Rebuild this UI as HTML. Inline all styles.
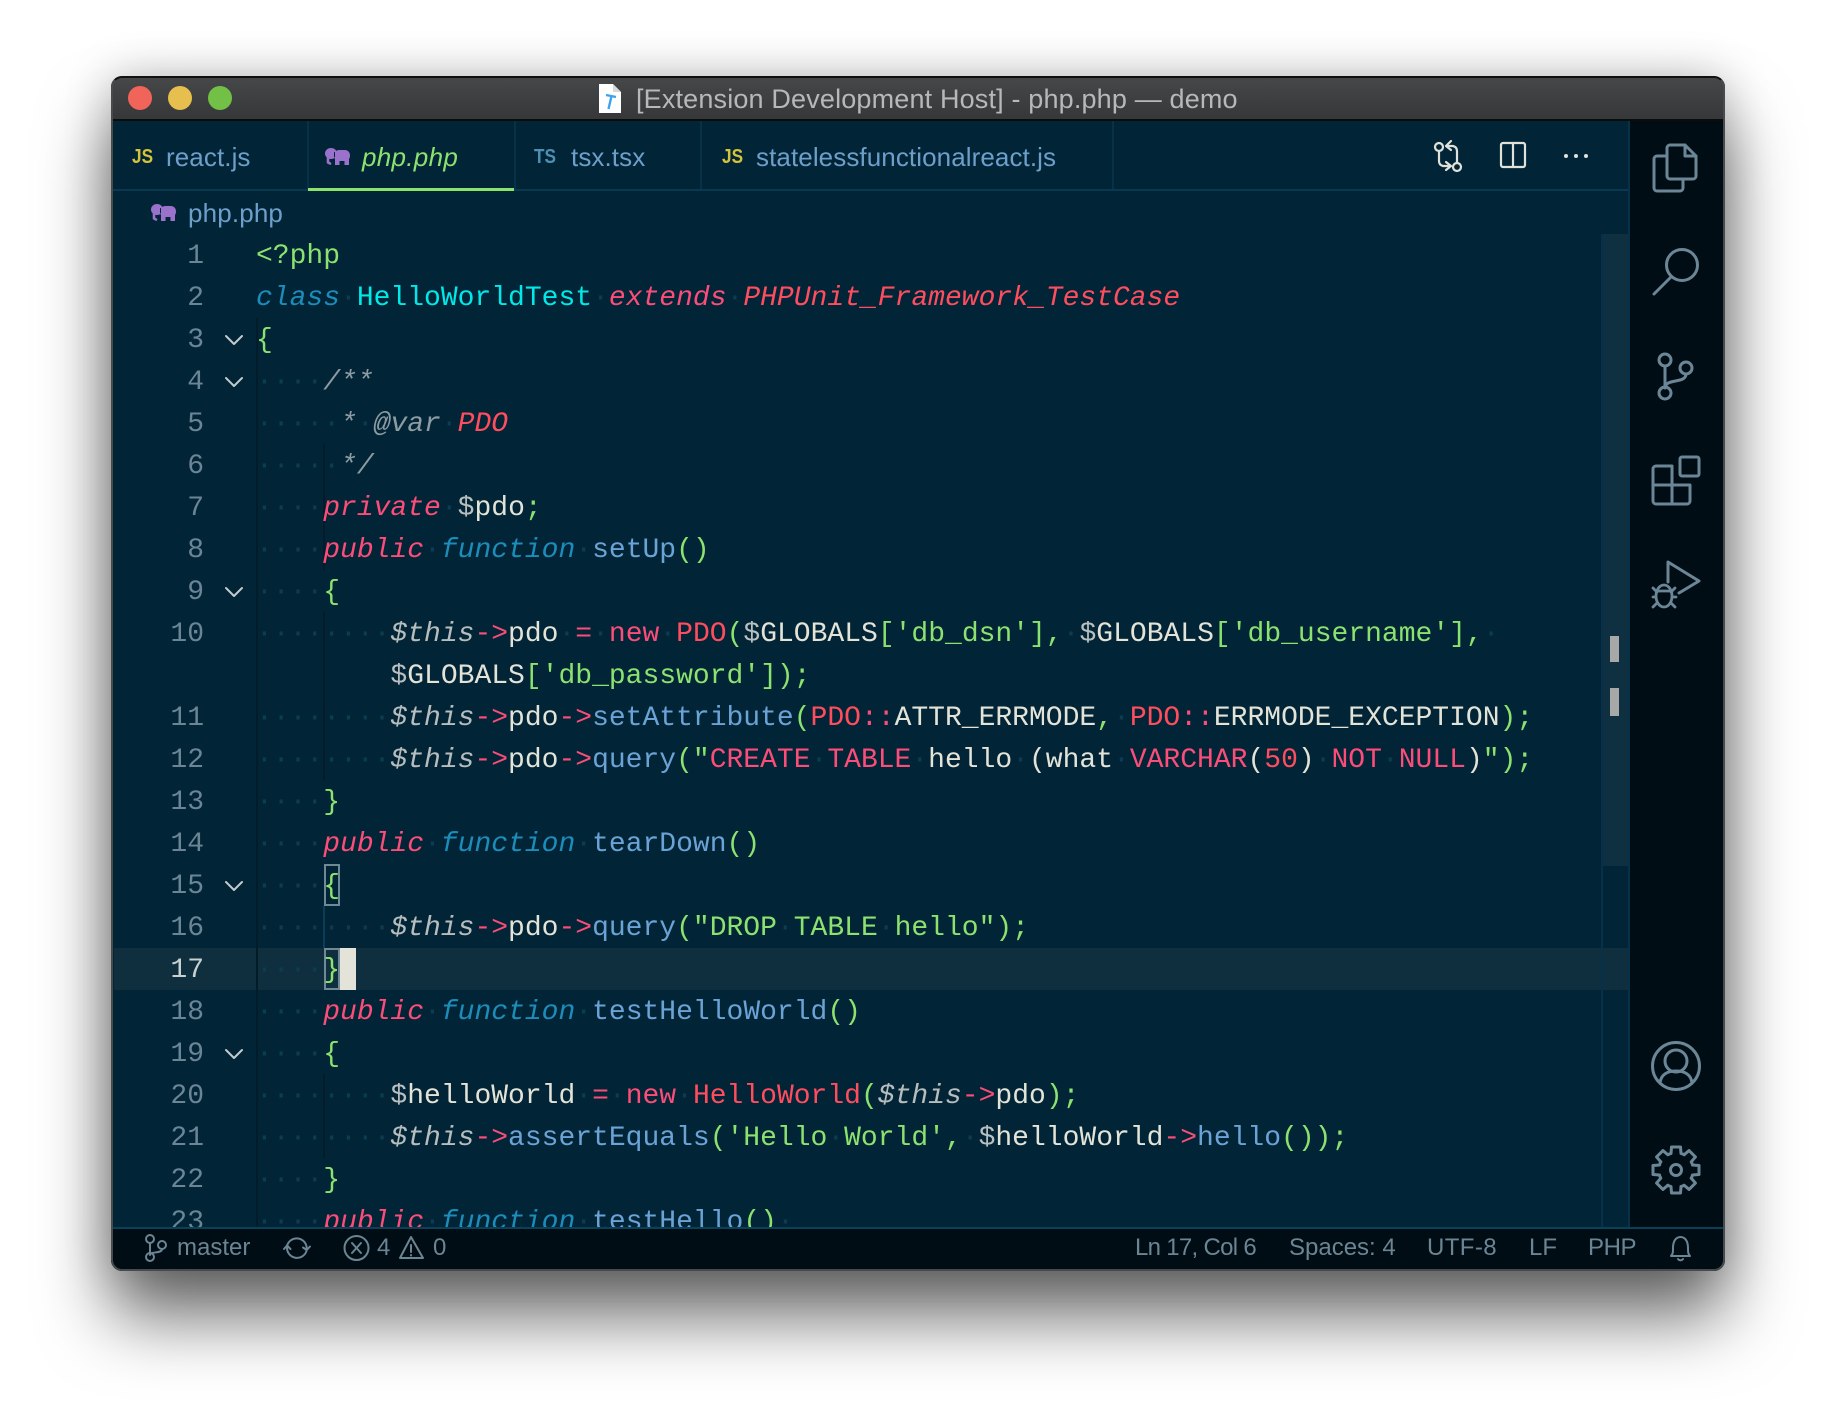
<!DOCTYPE html>
<html><head><meta charset="utf-8">
<style>
html,body{margin:0;padding:0;background:#fff}
body{width:1836px;height:1418px;overflow:hidden;position:relative}
.win{position:absolute;left:111px;top:76px;width:1614px;height:1195px;border-radius:11px;box-shadow:0 46px 70px rgba(0,0,0,.58),0 0 46px rgba(0,0,0,.22)}
.clip{position:absolute;left:0;top:0;width:1614px;height:1195px;border-radius:11px;overflow:hidden;background:#012537}
.in{position:absolute;left:-111px;top:-76px;width:1836px;height:1418px}
.a{position:absolute}
.s{font-family:"Liberation Sans",sans-serif;white-space:pre}
pre{margin:0;font-family:"Liberation Mono",monospace;font-size:28px;line-height:42px}
.t{position:absolute;font-size:26px;line-height:34px;top:140px;color:#6d9fca;letter-spacing:.09px}
.st{position:absolute;font-size:24px;line-height:30px;top:1233px;color:#6b8594}
.ic{position:absolute;top:144px;font-size:20px;line-height:26px;font-weight:bold;transform:scaleX(.86);transform-origin:0 50%}
.d{color:#0d3c52}
.k{color:#fb4d78;font-style:italic}
.f{color:#1c8dbb;font-style:italic}
.g{color:#8ce26f}
.b{color:#6ba3d6}
.w{color:#e3e3d8}
.c{color:#8d9ba3;font-style:italic}
.i{color:#b7bdbd;font-style:italic}
.r{color:#ff4d5e}
.ri{color:#ff4d5e;font-style:italic}
.p{color:#fb4d78}
.y{color:#00e8e8}
.v{color:#b9bfbf}
</style></head>
<body>
<div class="win"><div class="clip"><div class="in">
  <!-- title bar -->
  <div class="a" style="left:111px;top:76px;width:1614px;height:45px;background:linear-gradient(#46484a,#353739);border-bottom:2px solid #0c0c0c;box-sizing:border-box"></div>
  <div class="a" style="left:128px;top:86px;width:24px;height:24px;border-radius:50%;background:#f0645a"></div>
  <div class="a" style="left:168px;top:86px;width:24px;height:24px;border-radius:50%;background:#e6bf4e"></div>
  <div class="a" style="left:208px;top:86px;width:24px;height:24px;border-radius:50%;background:#72c045"></div>
  <svg class="a" style="left:598px;top:82px" width="24" height="32" viewBox="0 0 24 32"><path d="M1 2H15L23 10V31H1Z" fill="#fff"/><path d="M15 2V10H23" fill="#d8d8d8"/><path d="M8 13L18 15M13.5 14L10.5 27" stroke="#3ea2ee" stroke-width="2.4" fill="none"/></svg>
  <div class="a s" style="left:636px;top:83px;font-size:27px;letter-spacing:.165px;line-height:32px;color:#b6b8b9">[Extension Development Host] - php.php — demo</div>

  <!-- tabs -->
  <div class="a" style="left:111px;top:189px;width:1519px;height:2px;background:#0a3850"></div>
  <div class="a" style="left:307px;top:121px;width:2px;height:68px;background:#053248"></div>
  <div class="a" style="left:514px;top:121px;width:2px;height:68px;background:#053248"></div>
  <div class="a" style="left:700px;top:121px;width:2px;height:68px;background:#053248"></div>
  <div class="a" style="left:1112px;top:121px;width:2px;height:68px;background:#053248"></div>
  <div class="a" style="left:308px;top:188px;width:206px;height:3px;background:#8ce26f"></div>
  <div class="ic s" style="left:132px;color:#d6c33c">JS</div>
  <div class="t s" style="left:166px">react.js</div>
  <div class="t s" style="left:362px;color:#8ce26f;font-style:italic;letter-spacing:.3px">php.php</div>
  <div class="ic s" style="left:534px;color:#4e90b4">TS</div>
  <div class="t s" style="left:571px">tsx.tsx</div>
  <div class="ic s" style="left:722px;color:#d6c33c">JS</div>
  <div class="t s" style="left:756px">statelessfunctionalreact.js</div>
  <div class="a s" style="left:188px;top:196px;font-size:26px;letter-spacing:.15px;line-height:34px;color:#6d9fca">php.php</div>

  <!-- current line -->
  <div class="a" style="left:114px;top:948px;width:1514px;height:42px;background:#0f2f3e"></div>
  <div class="a" style="left:256px;top:948px;width:2px;height:42px;background:#021c2a"></div>
  <!-- scrollbar -->
  <div class="a" style="left:1601px;top:234px;width:27px;height:632px;background:#0e3040"></div>
  <div class="a" style="left:1601px;top:234px;width:2px;height:993px;background:#073049"></div>
  <div class="a" style="left:1610px;top:636px;width:9px;height:26px;background:#a8a8a8"></div>
  <div class="a" style="left:1610px;top:688px;width:9px;height:28px;background:#a8a8a8"></div>
  <!-- guides -->
  <div class="a" style="left:256px;top:318px;width:2px;height:909px;background:#021c2a"></div>
  <div class="a" style="left:323px;top:444px;width:2px;height:126px;background:#021c2a"></div>
  <div class="a" style="left:323px;top:612px;width:2px;height:168px;background:#021c2a"></div>
  <div class="a" style="left:323px;top:906px;width:2px;height:42px;background:#0a3d5a"></div>
  <div class="a" style="left:323px;top:1074px;width:2px;height:84px;background:#021c2a"></div>
  <!-- bracket boxes & cursor -->
  <div class="a" style="left:324px;top:864px;width:16px;height:42px;box-sizing:border-box;border:2px solid #6f8a96"></div>
  <div class="a" style="left:324px;top:948px;width:16px;height:42px;box-sizing:border-box;border:2px solid #6f8a96"></div>
  <div class="a" style="left:340px;top:948px;width:16px;height:42px;background:#e3e3da"></div>

  <!-- editor -->
  <div class="a" style="left:114px;top:234px;width:1487px;height:993px;overflow:hidden">
<pre class="a" style="left:0;top:2px;width:90px;text-align:right;color:#6b8594">1
2
3
4
5
6
7
8
9
10

11
12
13
14
15
16
<span style="color:#c9d0d2">17</span>
18
19
20
21
22
23</pre>
<pre class="a" style="left:142px;top:2px"><span class="g">&lt;?php</span>
<span class="f">class</span><span class="d">·</span><span class="y">HelloWorldTest</span><span class="d">·</span><span class="k">extends</span><span class="d">·</span><span class="ri">PHPUnit_Framework_TestCase</span>
<span class="g">{</span>
<span class="d">····</span><span class="c">/**</span>
<span class="d">·····</span><span class="c">*</span><span class="d">·</span><span class="c">@var</span><span class="d">·</span><span class="ri">PDO</span>
<span class="d">·····</span><span class="c">*/</span>
<span class="d">····</span><span class="k">private</span><span class="d">·</span><span class="v">$</span><span class="w">pdo</span><span class="g">;</span>
<span class="d">····</span><span class="k">public</span><span class="d">·</span><span class="f">function</span><span class="d">·</span><span class="b">setUp</span><span class="g">()</span>
<span class="d">····</span><span class="g">{</span>
<span class="d">········</span><span class="i">$this</span><span class="p">-&gt;</span><span class="w">pdo</span><span class="d">·</span><span class="p">=</span><span class="d">·</span><span class="p">new</span><span class="d">·</span><span class="r">PDO</span><span class="g">(</span><span class="v">$</span><span class="w">GLOBALS</span><span class="g">['db_dsn'],</span><span class="d">·</span><span class="v">$</span><span class="w">GLOBALS</span><span class="g">['db_username'],</span><span class="d">·</span>
        <span class="v">$</span><span class="w">GLOBALS</span><span class="g">['db_password']);</span>
<span class="d">········</span><span class="i">$this</span><span class="p">-&gt;</span><span class="w">pdo</span><span class="p">-&gt;</span><span class="b">setAttribute</span><span class="g">(</span><span class="r">PDO</span><span class="p">::</span><span class="w">ATTR_ERRMODE</span><span class="g">,</span><span class="d">·</span><span class="r">PDO</span><span class="p">::</span><span class="w">ERRMODE_EXCEPTION</span><span class="g">);</span>
<span class="d">········</span><span class="i">$this</span><span class="p">-&gt;</span><span class="w">pdo</span><span class="p">-&gt;</span><span class="b">query</span><span class="g">("</span><span class="p">CREATE</span><span class="d">·</span><span class="p">TABLE</span><span class="d">·</span><span class="w">hello</span><span class="d">·</span><span class="w">(what</span><span class="d">·</span><span class="p">VARCHAR</span><span class="w">(</span><span class="r">50</span><span class="w">)</span><span class="d">·</span><span class="p">NOT</span><span class="d">·</span><span class="p">NULL</span><span class="w">)</span><span class="g">");</span>
<span class="d">····</span><span class="g">}</span>
<span class="d">····</span><span class="k">public</span><span class="d">·</span><span class="f">function</span><span class="d">·</span><span class="b">tearDown</span><span class="g">()</span>
<span class="d">····</span><span class="g">{</span>
<span class="d">········</span><span class="i">$this</span><span class="p">-&gt;</span><span class="w">pdo</span><span class="p">-&gt;</span><span class="b">query</span><span class="g">("DROP</span><span class="d">·</span><span class="g">TABLE</span><span class="d">·</span><span class="g">hello");</span>
<span class="d">····</span><span class="g">}</span>
<span class="d">····</span><span class="k">public</span><span class="d">·</span><span class="f">function</span><span class="d">·</span><span class="b">testHelloWorld</span><span class="g">()</span>
<span class="d">····</span><span class="g">{</span>
<span class="d">········</span><span class="v">$</span><span class="w">helloWorld</span><span class="d">·</span><span class="p">=</span><span class="d">·</span><span class="p">new</span><span class="d">·</span><span class="r">HelloWorld</span><span class="g">(</span><span class="i">$this</span><span class="p">-&gt;</span><span class="w">pdo</span><span class="g">);</span>
<span class="d">········</span><span class="i">$this</span><span class="p">-&gt;</span><span class="b">assertEquals</span><span class="g">('Hello</span><span class="d">·</span><span class="g">World',</span><span class="d">·</span><span class="v">$</span><span class="w">helloWorld</span><span class="p">-&gt;</span><span class="b">hello</span><span class="g">());</span>
<span class="d">····</span><span class="g">}</span>
<span class="d">····</span><span class="k">public</span><span class="d">·</span><span class="f">function</span><span class="d">·</span><span class="b">testHello</span><span class="g">()</span><span class="d">·</span></pre>
  </div>

  <!-- activity bar -->
  <div class="a" style="left:1628px;top:121px;width:97px;height:1106px;background:#000d14;border-left:2px solid #073049;box-sizing:border-box"></div>
  <!-- status bar -->
  <div class="a" style="left:111px;top:1227px;width:1614px;height:44px;background:#000d14;border-top:2px solid #0a4058;box-sizing:border-box"></div>
  <div class="st s" style="left:177px">master</div>
  <div class="st s" style="left:377px">4</div>
  <div class="st s" style="left:433px">0</div>
  <div class="st s" style="left:1135px;letter-spacing:-.7px">Ln 17, Col 6</div>
  <div class="st s" style="left:1289px">Spaces: 4</div>
  <div class="st s" style="left:1427px;letter-spacing:.4px">UTF-8</div>
  <div class="st s" style="left:1529px">LF</div>
  <div class="st s" style="left:1588px;letter-spacing:-.4px">PHP</div>

  <!-- icons -->
  <svg class="a" style="left:0;top:0" width="1836" height="1418" viewBox="0 0 1836 1418" fill="none" stroke-linecap="round" stroke-linejoin="round">
    <!-- elephants -->
    <g id="el">
      <ellipse cx="331" cy="153.500" rx="6" ry="5.500" fill="#9a72cc"/>
      <rect x="334" y="150" width="16" height="11" rx="5" fill="#9a72cc"/>
      <rect x="335" y="157" width="4.500" height="8" fill="#9a72cc"/>
      <rect x="344.500" y="157" width="4.500" height="8" fill="#9a72cc"/>
      <path d="M328 157V162.500L330 163.500" stroke="#9a72cc" stroke-width="2.600"/>
      <path d="M334.500 152.500V157" stroke="#012537" stroke-width="1"/>
    </g>
    <g transform="translate(-174 56)">
      <ellipse cx="331" cy="153.500" rx="6" ry="5.500" fill="#9a72cc"/>
      <rect x="334" y="150" width="16" height="11" rx="5" fill="#9a72cc"/>
      <rect x="335" y="157" width="4.500" height="8" fill="#9a72cc"/>
      <rect x="344.500" y="157" width="4.500" height="8" fill="#9a72cc"/>
      <path d="M328 157V162.500L330 163.500" stroke="#9a72cc" stroke-width="2.600"/>
      <path d="M334.500 152.500V157" stroke="#012537" stroke-width="1"/>
    </g>
    <!-- chevrons -->
    <g stroke="#c2cbcf" stroke-width="2">
      <path d="M226 336l8 8 8-8"/>
      <path d="M226 378l8 8 8-8"/>
      <path d="M226 588l8 8 8-8"/>
      <path d="M226 882l8 8 8-8"/>
      <path d="M226 1050l8 8 8-8"/>
    </g>
    <!-- editor actions -->
    <g stroke="#e0e2da" stroke-width="2.200">
      <circle cx="1439" cy="147" r="4"/>
      <circle cx="1457" cy="167" r="4"/>
      <path d="M1439 151V161q0 4 4 5h8M1446 162l5 4-5 4"/>
      <path d="M1457 163V151q0-4-4-5h-7M1451 141l-5 5 5 4"/>
      <rect x="1501" y="143" width="24" height="24" rx="2"/>
      <path d="M1513 143V167"/>
    </g>
    <g fill="#e0e2da" stroke="none">
      <circle cx="1566" cy="156" r="2"/><circle cx="1576" cy="156" r="2"/><circle cx="1586" cy="156" r="2"/>
    </g>
    <!-- activity -->
    <g stroke="#6b8797" stroke-width="3">
      <path d="M1670 145H1685L1696 156V176a3 3 0 0 1-3 3H1670a3 3 0 0 1-3-3V148a3 3 0 0 1 3-3Z"/>
      <path d="M1685 145V156H1696"/>
      <path d="M1667 156H1657a3 3 0 0 0-3 3V188a3 3 0 0 0 3 3H1680a3 3 0 0 0 3-3V179"/>
      <circle cx="1682" cy="265" r="15.500"/>
      <path d="M1671 277L1654 294"/>
      <circle cx="1665" cy="360" r="6"/>
      <circle cx="1665" cy="393" r="6"/>
      <circle cx="1686" cy="368" r="6"/>
      <path d="M1665 366V387M1686 374C1686 384 1665 378 1665 388"/>
      <rect x="1680" y="457" width="19" height="19" rx="2"/>
      <path d="M1672 466H1656a3 3 0 0 0-3 3V501a3 3 0 0 0 3 3H1687a3 3 0 0 0 3-3V485H1653M1672 466V504"/>
      <path d="M1668 582V562L1699 581L1679 593"/>
      <ellipse cx="1664" cy="596" rx="8" ry="11" stroke-width="2.800"/>
      <path d="M1656 591H1672M1653 588l4 4M1675 588l-4 4M1653 597H1656M1672 597H1676M1653 607l4-4M1675 607l-4-4" stroke-width="2.800"/>
      <circle cx="1676" cy="1066" r="23.500"/>
      <ellipse cx="1676" cy="1061" rx="11" ry="11"/>
      <path d="M1660 1083c1-9 8-12 16-12s15 3 16 12"/>
      <circle cx="1676" cy="1170" r="5.500"/>
      <g>
        <path d="M-5 -16.500L-4.500 -23H4.500L5 -16.500L8.300 -15.400" transform="translate(1676 1170)"/>
        <path d="M-5 -16.500L-4.500 -23H4.500L5 -16.500L8.300 -15.400" transform="translate(1676 1170) rotate(45)"/>
        <path d="M-5 -16.500L-4.500 -23H4.500L5 -16.500L8.300 -15.400" transform="translate(1676 1170) rotate(90)"/>
        <path d="M-5 -16.500L-4.500 -23H4.500L5 -16.500L8.300 -15.400" transform="translate(1676 1170) rotate(135)"/>
        <path d="M-5 -16.500L-4.500 -23H4.500L5 -16.500L8.300 -15.400" transform="translate(1676 1170) rotate(180)"/>
        <path d="M-5 -16.500L-4.500 -23H4.500L5 -16.500L8.300 -15.400" transform="translate(1676 1170) rotate(225)"/>
        <path d="M-5 -16.500L-4.500 -23H4.500L5 -16.500L8.300 -15.400" transform="translate(1676 1170) rotate(270)"/>
        <path d="M-5 -16.500L-4.500 -23H4.500L5 -16.500L8.300 -15.400" transform="translate(1676 1170) rotate(315)"/>
      </g>
    </g>
    <!-- status icons -->
    <g stroke="#6b8594" stroke-width="2">
      <circle cx="150" cy="1239" r="4"/>
      <circle cx="150" cy="1257" r="4"/>
      <circle cx="162" cy="1245" r="4"/>
      <path d="M150 1243V1253M162 1249c0 5-12 2-12 6"/>
      <path d="M287 1246A10 10 0 0 1 306.700 1249M303 1247.500L306.700 1250L310 1246.500"/>
      <path d="M306.500 1251A10 10 0 0 1 287 1247.500M284 1249L287 1245.500L290.500 1249"/>
      <circle cx="356.500" cy="1248" r="12"/>
      <path d="M352 1243l9 10M361 1243l-9 10"/>
      <path d="M411 1237L400 1258H423Z"/>
      <path d="M411 1245V1252M411 1255V1255.500"/>
      <path d="M1671 1256c2-2 2-4 2-8 0-7 3-11 7.500-11s7.500 4 7.500 11c0 4 0 6 2 8ZM1678 1259a3 3 0 0 0 5 0"/>
    </g>
  </svg>

  <!-- window edge -->
  <div class="a" style="left:111px;top:76px;width:1614px;height:1195px;box-sizing:border-box;border-radius:11px;border:2px solid #474b4e;border-top:2px solid #111"></div>
</div></div></div>
</body></html>
